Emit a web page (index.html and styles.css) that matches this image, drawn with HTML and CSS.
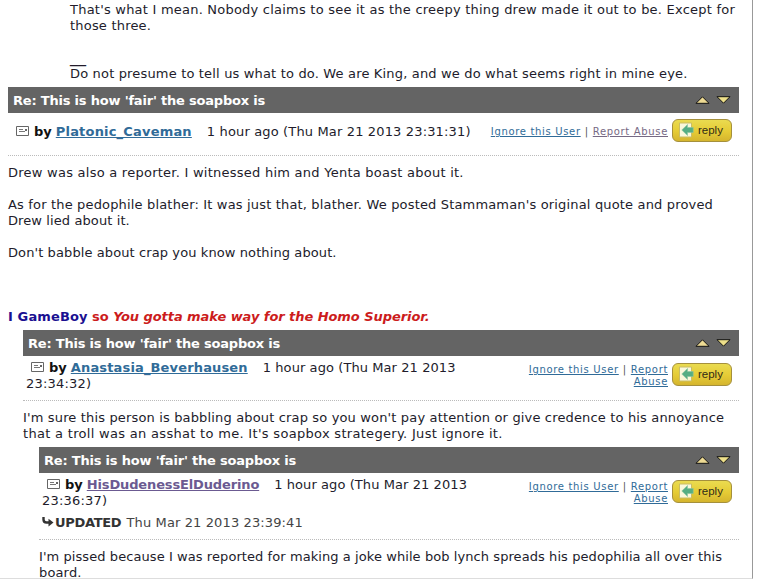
FILE: index.html
```html
<!DOCTYPE html>
<html lang="en">
<head>
<meta charset="utf-8">
<title>Re: This is how 'fair' the soapbox is</title>
<link rel="stylesheet" href="styles.css">
</head>
<body>
<svg class="defs" width="0" height="0">
  <symbol id="card" viewBox="0 0 13 10"><path d="M.5.5h12v9H.5z" fill="#fff" stroke="#666"/><path d="M3 3.5h4M3 5.5h6" stroke="#777"/><path d="M9 3h2v2H9z" fill="#666"/></symbol>
  <symbol id="up" viewBox="0 0 15 8"><path d="M1 7.3 7.5.8 14 7.3z" fill="#eedb94" stroke="#111"/></symbol>
  <symbol id="down" viewBox="0 0 15 8"><path d="M1 .7 7.5 7.2 14 .7z" fill="#eee08a" stroke="#111"/></symbol>
  <symbol id="back" viewBox="0 0 15 16"><path d="M.5 1h12v14H.5z" fill="#faf8da" stroke="#c9bd66"/><path d="M2.8 8 8.5 2.5v3h5.7v5H8.5v3z" fill="#55ae83" stroke="#8bc4a0" stroke-width=".6"/></symbol>
  <symbol id="turn" viewBox="0 0 12 10"><path d="M1.5 0v2.5q0 3 3 3H8" fill="none" stroke="#333" stroke-width="2.4"/><path d="M6.5 1.8 11.5 5.6 6.5 9.6z" fill="#333"/></symbol>
</svg>
<main class="thread">
  <div class="text quoted">
    <p><span class="l1">That's what I mean. Nobody claims to see it as the creepy thing drew made it out to be. Except for</span><br><span class="l2">those three.</span></p>
    <p class="sig"><span class="rule">__</span><br><span class="l3">Do not presume to tell us what to do. We are King, and we do what seems right in mine eye.</span></p>
  </div>

  <article class="post">
    <h2 class="bar"><span class="title">Re: This is how 'fair' the soapbox is</span><span class="nav"><svg><use href="#up"/></svg><svg><use href="#down"/></svg></span></h2>
    <div class="meta single">
      <div class="byline"><svg class="card"><use href="#card"/></svg><b class="by">by</b><a class="user u1" href="#">Platonic_Caveman</a><span class="date">1 hour ago (Thu Mar 21 2013 23:31:31)</span></div>
      <div class="actions"><a href="#">Ignore this User</a><i>|</i><a class="visited" href="#">Report Abuse</a></div>
      <button class="reply"><svg><use href="#back"/></svg>reply</button>
    </div>
    <div class="text">
      <p><span class="l4">Drew was also a reporter. I witnessed him and Yenta boast about it.</span></p>
      <p><span class="l5">As for the pedophile blather: It was just that, blather. We posted Stammaman's original quote and proved</span><br><span class="l6">Drew lied about it.</span></p>
      <p><span class="l7">Don't babble about crap you know nothing about.</span></p>
      <p class="slogan"><span class="blue">I GameBoy</span> so <em>You gotta make way for the Homo Superior.</em></p>
    </div>
  </article>

  <article class="post reply1">
    <h2 class="bar"><span class="title">Re: This is how 'fair' the soapbox is</span><span class="nav"><svg><use href="#up"/></svg><svg><use href="#down"/></svg></span></h2>
    <div class="meta">
      <div class="byline"><svg class="card"><use href="#card"/></svg><b class="by">by</b><a class="user u2" href="#">Anastasia_Beverhausen</a><span class="date">1 hour ago (Thu Mar 21 2013</span><br><span class="date2">23:34:32)</span></div>
      <div class="actions"><a href="#">Ignore this User</a><i>|</i><a href="#">Report<br>Abuse</a></div>
      <button class="reply"><svg><use href="#back"/></svg>reply</button>
    </div>
    <div class="text">
      <p><span class="l8">I'm sure this person is babbling about crap so you won't pay attention or give credence to his annoyance</span><br><span class="l9">that a troll was an asshat to me. It's soapbox strategery. Just ignore it.</span></p>
    </div>
  </article>

  <article class="post reply2">
    <h2 class="bar"><span class="title">Re: This is how 'fair' the soapbox is</span><span class="nav"><svg><use href="#up"/></svg><svg><use href="#down"/></svg></span></h2>
    <div class="meta edited">
      <div class="byline"><svg class="card"><use href="#card"/></svg><b class="by">by</b><a class="user u3 visited" href="#">HisDudenessElDuderino</a><span class="date">1 hour ago (Thu Mar 21 2013</span><br><span class="date2">23:36:37)</span>
        <div class="updated"><svg><use href="#turn"/></svg><b>UPDATED</b> <span>Thu Mar 21 2013 23:39:41</span></div></div>
      <div class="actions"><a href="#">Ignore this User</a><i>|</i><a href="#">Report<br>Abuse</a></div>
      <button class="reply"><svg><use href="#back"/></svg>reply</button>
    </div>
    <div class="text">
      <p><span class="l10">I'm pissed because I was reported for making a joke while bob lynch spreads his pedophilia all over this</span><br><span class="l11">board.</span></p>
    </div>
  </article>
</main>
</body>
</html>
```
FILE: styles.css
```css
* { box-sizing: border-box; }
html, body { height: 100%; overflow: hidden; }
body { margin: 0; background: #fff; color: #221c2b; font: 13px/16px Verdana, "DejaVu Sans", sans-serif; }
.defs { position: absolute; }
.thread { width: 753px; height: 579px; overflow: hidden; padding: 1px 13px 0 8px; border-right: 1px solid #999; border-bottom: 1px solid #ddd; }
p { margin: 0 0 16px; white-space: nowrap; }
.text { padding-top: 1px; }
.text p:last-child { margin-bottom: 0; }
.quoted { padding: 1px 0 5px 62px; }
.rule { font-size: 16px; line-height: 0; }
.l1 { letter-spacing: .223px; }
.l2 { letter-spacing: .2px; }
.l3 { letter-spacing: .168px; }
.l4 { letter-spacing: .25px; }
.l5 { letter-spacing: .165px; }
.l6, .l7 { letter-spacing: .1px; }
.l8 { letter-spacing: .155px; }
.l9 { letter-spacing: .305px; }
.l10 { letter-spacing: .075px; }
.l11 { letter-spacing: .15px; }
.post { margin-bottom: 5px; }
.reply1 { margin-left: 15px; }
.reply2 { margin-left: 31px; }
.bar { display: flex; align-items: center; justify-content: space-between; height: 26px; margin: 0; padding: 0 8px 0 5px; background: #646464; color: #fff; font-size: 13px; line-height: 16px; letter-spacing: -.2px; }
.title { padding-top: 2px; }
.nav { display: flex; gap: 6px; }
.nav svg { width: 15px; height: 8px; }
.meta { display: flex; height: 45px; margin-bottom: 8px; padding: 4px 7px 0 3px; border-bottom: 1px dotted #bbb; }
.meta.single { height: 43px; padding-top: 10px; }
.meta.edited { height: 67px; }
.byline { flex: 1; white-space: nowrap; }
.single .byline { padding-top: 1px; }
.card { width: 13px; height: 10px; margin: 0 5px 0 5px; }
.by { color: #111; }
.user { margin: 0 15px 0 4px; font-weight: bold; }
.u1 { letter-spacing: .19px; }
.u2 { letter-spacing: .15px; }
.u3 { letter-spacing: -.14px; }
.date { letter-spacing: .08px; }
.single .date { letter-spacing: .15px; }
.date2 { letter-spacing: .2px; }
a { color: #306b98; }
a.visited { color: #6b5a91; }
.actions { padding: 4px 4px 0 0; font-size: 10px; line-height: 12px; letter-spacing: .67px; text-align: right; white-space: nowrap; display: flex; }
.actions i { margin: 0 4px; color: #555; font-style: normal; }
.single .actions { padding-top: 3px; }
.single .actions .visited { color: #766984; }
.reply { display: flex; align-items: center; width: 60px; height: 23px; margin: 3px 0 0; padding: 0 0 1px 6px; border: 1px solid #a5903c; border-radius: 6px; background: linear-gradient(#eadb50, #e5cb35 55%, #d5b52e); color: #302c16; font: 11.5px "Liberation Sans", Arial, sans-serif; }
.single .reply { margin-top: -4px; }
.reply svg { width: 15px; height: 16px; margin-right: 4px; }
.updated { margin-top: 6px; color: #444; }
.updated svg { width: 12px; height: 10px; margin-right: 1px; }
.updated b { color: #333; letter-spacing: -.3px; }
.updated span { margin-left: 1px; letter-spacing: .12px; }
.slogan { padding-top: 32px; color: #cc1c1c; font-weight: bold; }
.slogan em { letter-spacing: -.06px; }
.blue { color: #1a1091; letter-spacing: .12px; }
```
